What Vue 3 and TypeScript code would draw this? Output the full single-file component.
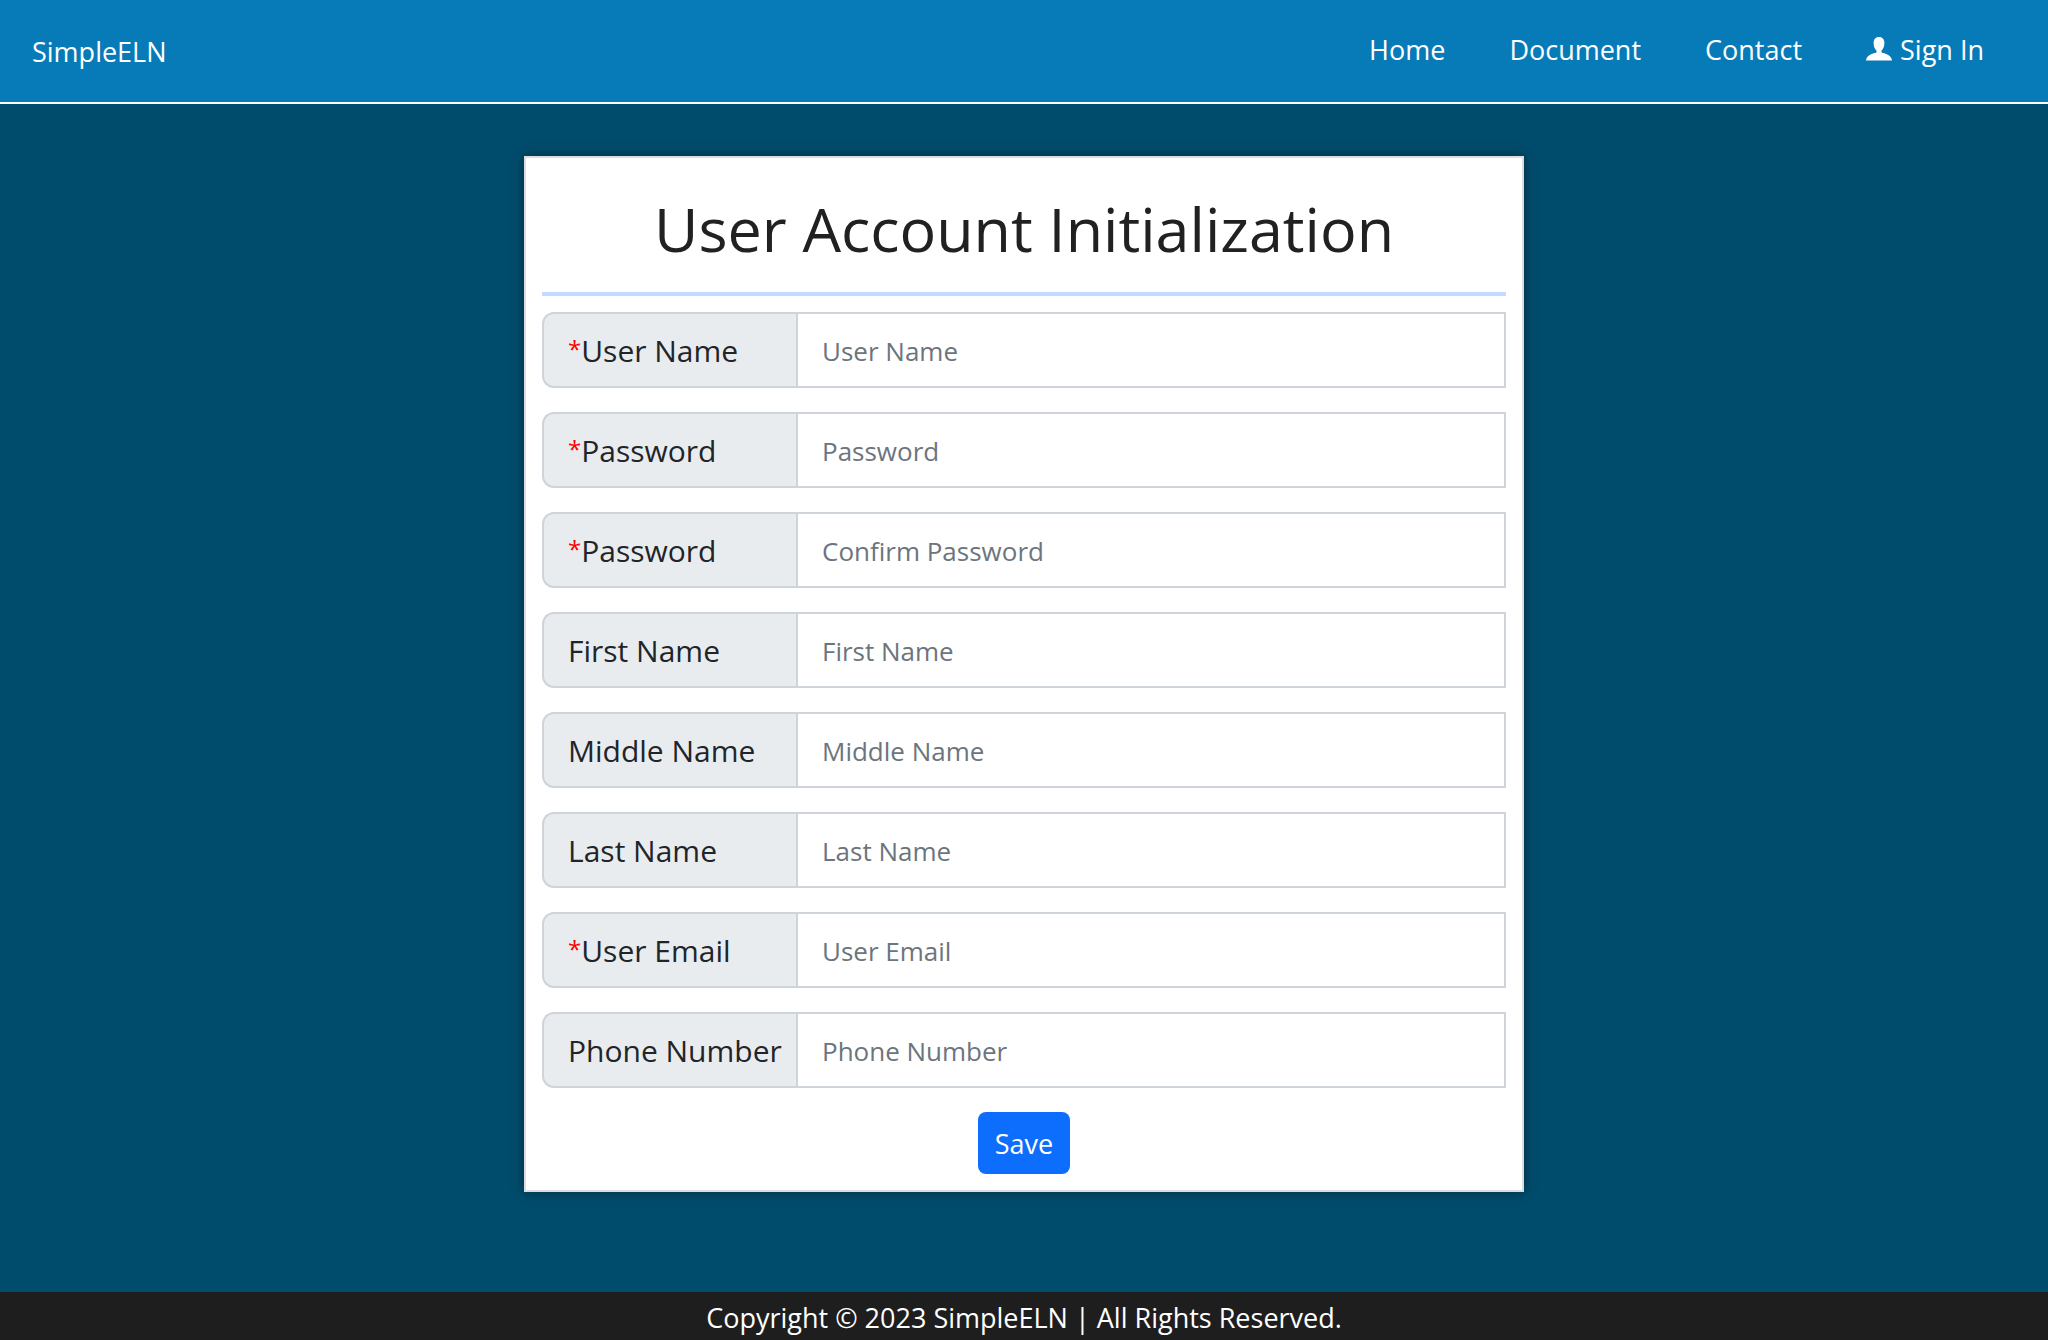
<script setup lang="ts">
import { ref } from 'vue'

interface Field {
  id: string
  label: string
  placeholder: string
  type: string
  required: boolean
}

const fields: Field[] = [
  { id: 'user-name', label: 'User Name', placeholder: 'User Name', type: 'text', required: true },
  { id: 'password', label: 'Password', placeholder: 'Password', type: 'password', required: true },
  { id: 'confirm-password', label: 'Password', placeholder: 'Confirm Password', type: 'password', required: true },
  { id: 'first-name', label: 'First Name', placeholder: 'First Name', type: 'text', required: false },
  { id: 'middle-name', label: 'Middle Name', placeholder: 'Middle Name', type: 'text', required: false },
  { id: 'last-name', label: 'Last Name', placeholder: 'Last Name', type: 'text', required: false },
  { id: 'user-email', label: 'User Email', placeholder: 'User Email', type: 'email', required: true },
  { id: 'phone-number', label: 'Phone Number', placeholder: 'Phone Number', type: 'tel', required: false },
]

const values = ref<Record<string, string>>({})
</script>

<template>
  <div class="page">
    <header class="topbar">
      <a class="brand" href="#">SimpleELN</a>
      <nav class="links">
        <a href="#">Home</a>
        <a href="#">Document</a>
        <a href="#">Contact</a>
        <a class="signin" href="#">
          <svg class="user" viewBox="0 0 26 24" aria-hidden="true">
            <path
              d="M13 0c-3.600 0-5.400 2.400-5.400 6.200 0 3.200 1.200 6 2.900 7.300v1.700C9.800 16.500 0.500 16.500 0 23.500h26c-.5-7-9.800-7-10.500-8.300v-1.700c1.700-1.300 2.900-4.100 2.900-7.300C18.400 2.400 16.600 0 13 0z"
            />
          </svg>
          <span>Sign In</span>
        </a>
      </nav>
    </header>

    <main class="content">
      <form class="card" @submit.prevent>
        <h1>User Account Initialization</h1>
        <div class="fields">
          <div v-for="field in fields" :key="field.id" class="group">
            <label :for="field.id"><span v-if="field.required" class="star">*</span>{{ field.label }}</label>
            <input :id="field.id" v-model="values[field.id]" :type="field.type" :placeholder="field.placeholder" />
          </div>
        </div>
        <button type="submit">Save</button>
      </form>
    </main>

    <footer class="footer">Copyright © 2023 SimpleELN | All Rights Reserved.</footer>
  </div>
</template>

<style>
body {
  margin: 0;
}
</style>

<style scoped>
.page {
  display: flex;
  flex-direction: column;
  min-height: 100vh;
  background: #004c6d;
  color: #212529;
  font-family: 'Open Sans', 'Noto Sans', sans-serif;
  font-size: 27px;
  line-height: 40px;
}

.topbar {
  display: flex;
  align-items: center;
  justify-content: space-between;
  height: 102px;
  padding: 0 64px 0 32px;
  border-bottom: 2px solid #fff;
  background: #077bb8;
}

.topbar a {
  color: #fff;
  text-decoration: none;
}

.brand {
  padding-top: 2px;
}

.links {
  display: flex;
  gap: 64px;
  padding-bottom: 2px;
}

.signin {
  display: flex;
  align-items: center;
  gap: 8px;
}

.user {
  width: 26px;
  height: 24px;
  padding-bottom: 2px;
  fill: #fff;
}

.content {
  flex: 1;
  padding: 52px 24px 100px;
}

.card {
  display: flex;
  flex-direction: column;
  box-sizing: border-box;
  max-width: 1000px;
  margin: 0 auto;
  padding: 16px;
  border: 2px solid #ddd;
  background: #fff;
  box-shadow: 0 0 12px rgba(0, 0, 0, 0.4);
}

h1 {
  margin: 0 0 16px;
  padding: 16px 0 24px;
  border-bottom: 4px solid #c2dbfe;
  color: #212121;
  font-size: 61px;
  font-weight: 400;
  line-height: 78px;
  text-align: center;
}

.fields {
  display: flex;
  flex-direction: column;
  gap: 24px;
}

.group {
  display: flex;
  height: 76px;
}

.group label {
  display: flex;
  align-items: center;
  box-sizing: border-box;
  width: 254px;
  padding: 2px 0 0 24px;
  border: 2px solid #ced4da;
  border-right: 0;
  border-radius: 12px 0 0 12px;
  background: #e9ecef;
  font-size: 30px;
  white-space: nowrap;
}

.star {
  padding-bottom: 4px;
  color: #f00;
  font-size: 24px;
}

.group input {
  flex: 1;
  box-sizing: border-box;
  min-width: 0;
  margin: 0;
  padding: 2px 24px 0;
  border: 2px solid #ced4da;
  border-radius: 0;
  background: #fff;
  color: #212529;
  font: inherit;
  font-size: 26px;
  outline: 0;
}

.group input::placeholder {
  color: #6c757d;
  opacity: 1;
}

button {
  align-self: center;
  height: 62px;
  margin-top: 24px;
  padding: 2px 17px 0;
  border: 0;
  border-radius: 8px;
  background: #0d6efd;
  color: #fff;
  font: inherit;
}

.footer {
  padding: 6px 0 2px;
  background: #1e1e1e;
  color: #fff;
  text-align: center;
}
</style>
